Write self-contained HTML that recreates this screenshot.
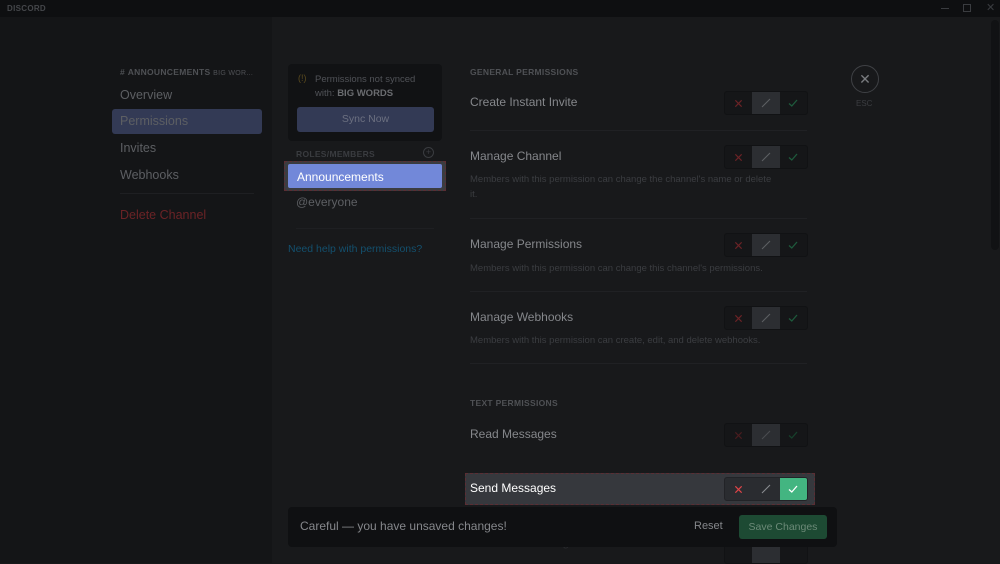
<!DOCTYPE html>
<html><head><meta charset="utf-8"><style>
*{margin:0;padding:0;box-sizing:border-box}
body{width:1000px;height:563px;overflow:hidden;background:#17181a;font-family:"Liberation Sans",sans-serif;position:relative}
.a{position:absolute}
.tb{left:0;top:0;width:1000px;height:17px;background:#0e0f11}
.side{left:0;top:17px;width:272px;height:546px;background:#141517}
.main{left:272px;top:17px;width:728px;height:546px;background:#18191b}
.nav{left:112px;width:150px;height:25px;font-size:12.5px;color:#5d5f63;padding:5px 8px}
.hd{font-size:8.5px;font-weight:bold;color:#4f5155;letter-spacing:.3px}
.pn{left:470px;font-size:12px;color:#85878b}
.ds{left:470px;font-size:9.5px;color:#3b3d41;line-height:15px}
.sep{left:470px;width:337px;height:1px;background:#202124}
.tg{left:724px;width:84px;height:24px;border:1px solid #111214;border-radius:3px;display:flex;background:#151618;overflow:hidden}
.tg div{flex:1;display:flex;align-items:center;justify-content:center}
.tg div:nth-child(2){background:#2c2e32}
svg{display:block}
</style></head><body>
<svg width="0" height="0" style="position:absolute"><defs>
<symbol id="x" viewBox="0 0 10 10"><path d="M1.5 1.5L8.5 8.5M8.5 1.5L1.5 8.5" stroke="currentColor" stroke-width="1.3" fill="none"/></symbol>
<symbol id="s" viewBox="0 0 10 10"><path d="M1 9L9 1" stroke="currentColor" stroke-width="1.1" fill="none"/></symbol>
<symbol id="c" viewBox="0 0 10 10"><path d="M1 5.5L3.8 8L9 2" stroke="currentColor" stroke-width="1.3" fill="none"/></symbol>
</defs></svg>
<div class="a tb"></div>
<div class="a" style="left:7px;top:4px;font-size:8px;font-weight:bold;color:#45474b;letter-spacing:.3px">DISCORD</div>
<div class="a" style="left:941px;top:8px;width:8px;height:1px;background:#3a3c40"></div>
<div class="a" style="left:963px;top:4px;width:8px;height:8px;border:1px solid #3a3c40"></div>
<div class="a" style="left:986px;top:1px;font-size:11px;color:#3a3c40">✕</div>
<div class="a side"></div>
<div class="a main"></div>
<div class="a" style="left:991px;top:20px;width:8px;height:230px;background:#111214;border-radius:4px"></div>

<div class="a hd" style="left:120px;top:67px">#&nbsp;ANNOUNCEMENTS <span style="font-weight:normal;font-size:7px">BIG WOR...</span></div>
<div class="a nav" style="top:83px">Overview</div>
<div class="a nav" style="top:109px;background:#333a55;border-radius:3px">Permissions</div>
<div class="a nav" style="top:136px">Invites</div>
<div class="a nav" style="top:163px">Webhooks</div>
<div class="a" style="left:120px;top:193px;width:134px;height:1px;background:#1e1f22"></div>
<div class="a nav" style="top:203px;color:#6b2326">Delete Channel</div>

<div class="a" style="left:288px;top:64px;width:154px;height:77px;background:#111214;border-radius:4px"></div>
<div class="a" style="left:298px;top:73px;font-size:9px;color:#5a4a1e">(!)</div>
<div class="a" style="left:315px;top:73px;font-size:9.5px;color:#505257;line-height:14px">Permissions not synced<br>with: <b style="color:#6a6c70">BIG WORDS</b></div>
<div class="a" style="left:297px;top:107px;width:137px;height:25px;background:#333a55;border-radius:3px;font-size:10.5px;color:#6c7080;text-align:center;line-height:25px">Sync Now</div>
<div class="a hd" style="left:296px;top:149px;color:#3a3c40">ROLES/MEMBERS</div>
<div class="a" style="left:423px;top:147px;width:11px;height:11px;border:1px solid #3a3c40;border-radius:50%;font-size:9px;line-height:9px;text-align:center;color:#3a3c40">+</div>
<div class="a" style="left:284px;top:161px;width:162px;height:30px;background:#3b3c40;border:1px dashed #5b2e34"></div>
<div class="a" style="left:288px;top:164px;width:154px;height:24px;background:#7288d9;border-radius:2px;font-size:12px;color:#fff;padding:6px 9px">Announcements</div>
<div class="a" style="left:296px;top:195px;font-size:12px;color:#5d5f63">@everyone</div>
<div class="a" style="left:296px;top:228px;width:138px;height:1px;background:#1e1f22"></div>
<div class="a" style="left:288px;top:243px;font-size:10.5px;color:#13506e">Need help with permissions?</div>

<div class="a" style="left:851px;top:65px;width:28px;height:28px;border:1px solid #3f4145;border-radius:50%;color:#7a7c80;font-size:14px;text-align:center;line-height:26px">✕</div>
<div class="a" style="left:856px;top:99px;font-size:8px;color:#3b3d41">ESC</div>

<div class="a hd" style="left:470px;top:67px">GENERAL PERMISSIONS</div>
<div class="a pn" style="top:95px">Create Instant Invite</div>
<div class="a sep" style="top:130px"></div>
<div class="a pn" style="top:149px">Manage Channel</div>
<div class="a ds" style="top:172px">Members with this permission can change the channel's name or delete<br>it.</div>
<div class="a sep" style="top:218px"></div>
<div class="a pn" style="top:237px">Manage Permissions</div>
<div class="a ds" style="top:261px">Members with this permission can change this channel's permissions.</div>
<div class="a sep" style="top:291px"></div>
<div class="a pn" style="top:310px">Manage Webhooks</div>
<div class="a ds" style="top:333px">Members with this permission can create, edit, and delete webhooks.</div>
<div class="a sep" style="top:363px"></div>
<div class="a hd" style="left:470px;top:398px">TEXT PERMISSIONS</div>
<div class="a pn" style="top:427px">Read Messages</div>

<div class="a tg" style="top:91px"><div style="color:#6b2326"><svg width="9" height="9"><use href="#x"/></svg></div><div style="color:#5d5f63"><svg width="10" height="10"><use href="#s"/></svg></div><div style="color:#1e5a3c"><svg width="10" height="10"><use href="#c"/></svg></div></div>
<div class="a tg" style="top:145px"><div style="color:#6b2326"><svg width="9" height="9"><use href="#x"/></svg></div><div style="color:#5d5f63"><svg width="10" height="10"><use href="#s"/></svg></div><div style="color:#1e5a3c"><svg width="10" height="10"><use href="#c"/></svg></div></div>
<div class="a tg" style="top:233px"><div style="color:#6b2326"><svg width="9" height="9"><use href="#x"/></svg></div><div style="color:#5d5f63"><svg width="10" height="10"><use href="#s"/></svg></div><div style="color:#1e5a3c"><svg width="10" height="10"><use href="#c"/></svg></div></div>
<div class="a tg" style="top:306px"><div style="color:#6b2326"><svg width="9" height="9"><use href="#x"/></svg></div><div style="color:#5d5f63"><svg width="10" height="10"><use href="#s"/></svg></div><div style="color:#1e5a3c"><svg width="10" height="10"><use href="#c"/></svg></div></div>
<div class="a tg" style="top:423px"><div style="color:#4a1c1f"><svg width="9" height="9"><use href="#x"/></svg></div><div style="color:#4a4c50"><svg width="10" height="10"><use href="#s"/></svg></div><div style="color:#16402b"><svg width="10" height="10"><use href="#c"/></svg></div></div>

<div class="a" style="left:465px;top:473px;width:350px;height:32px;background:#36383d;border:1px dashed #5b2e34"></div>
<div class="a" style="left:470px;top:481px;font-size:12px;color:#fff">Send Messages</div>
<div class="a tg" style="top:477px;background:#2a2c30;border-color:#222327"><div style="color:#e04548"><svg width="9" height="9"><use href="#x"/></svg></div><div style="color:#8a8c90;background:#2a2c30!important"><svg width="10" height="10"><use href="#s"/></svg></div><div style="color:#fff;background:#43b581"><svg width="10" height="10"><use href="#c"/></svg></div></div>

<div class="a" style="left:470px;top:535px;font-size:12px;color:#2a2b2f">Send TTS Messages</div>
<div class="a tg" style="top:540px"><div></div><div></div><div></div></div>
<div class="a" style="left:288px;top:507px;width:549px;height:40px;background:#0f1012;border-radius:4px"></div>
<div class="a" style="left:300px;top:519px;font-size:12px;color:#85878b">Careful — you have unsaved changes!</div>
<div class="a" style="left:694px;top:520px;font-size:11px;color:#85878b">Reset</div>
<div class="a" style="left:739px;top:515px;width:88px;height:24px;background:#1d4a33;border-radius:3px;font-size:10.5px;color:#6c8a78;text-align:center;line-height:24px">Save Changes</div>
</body></html>
